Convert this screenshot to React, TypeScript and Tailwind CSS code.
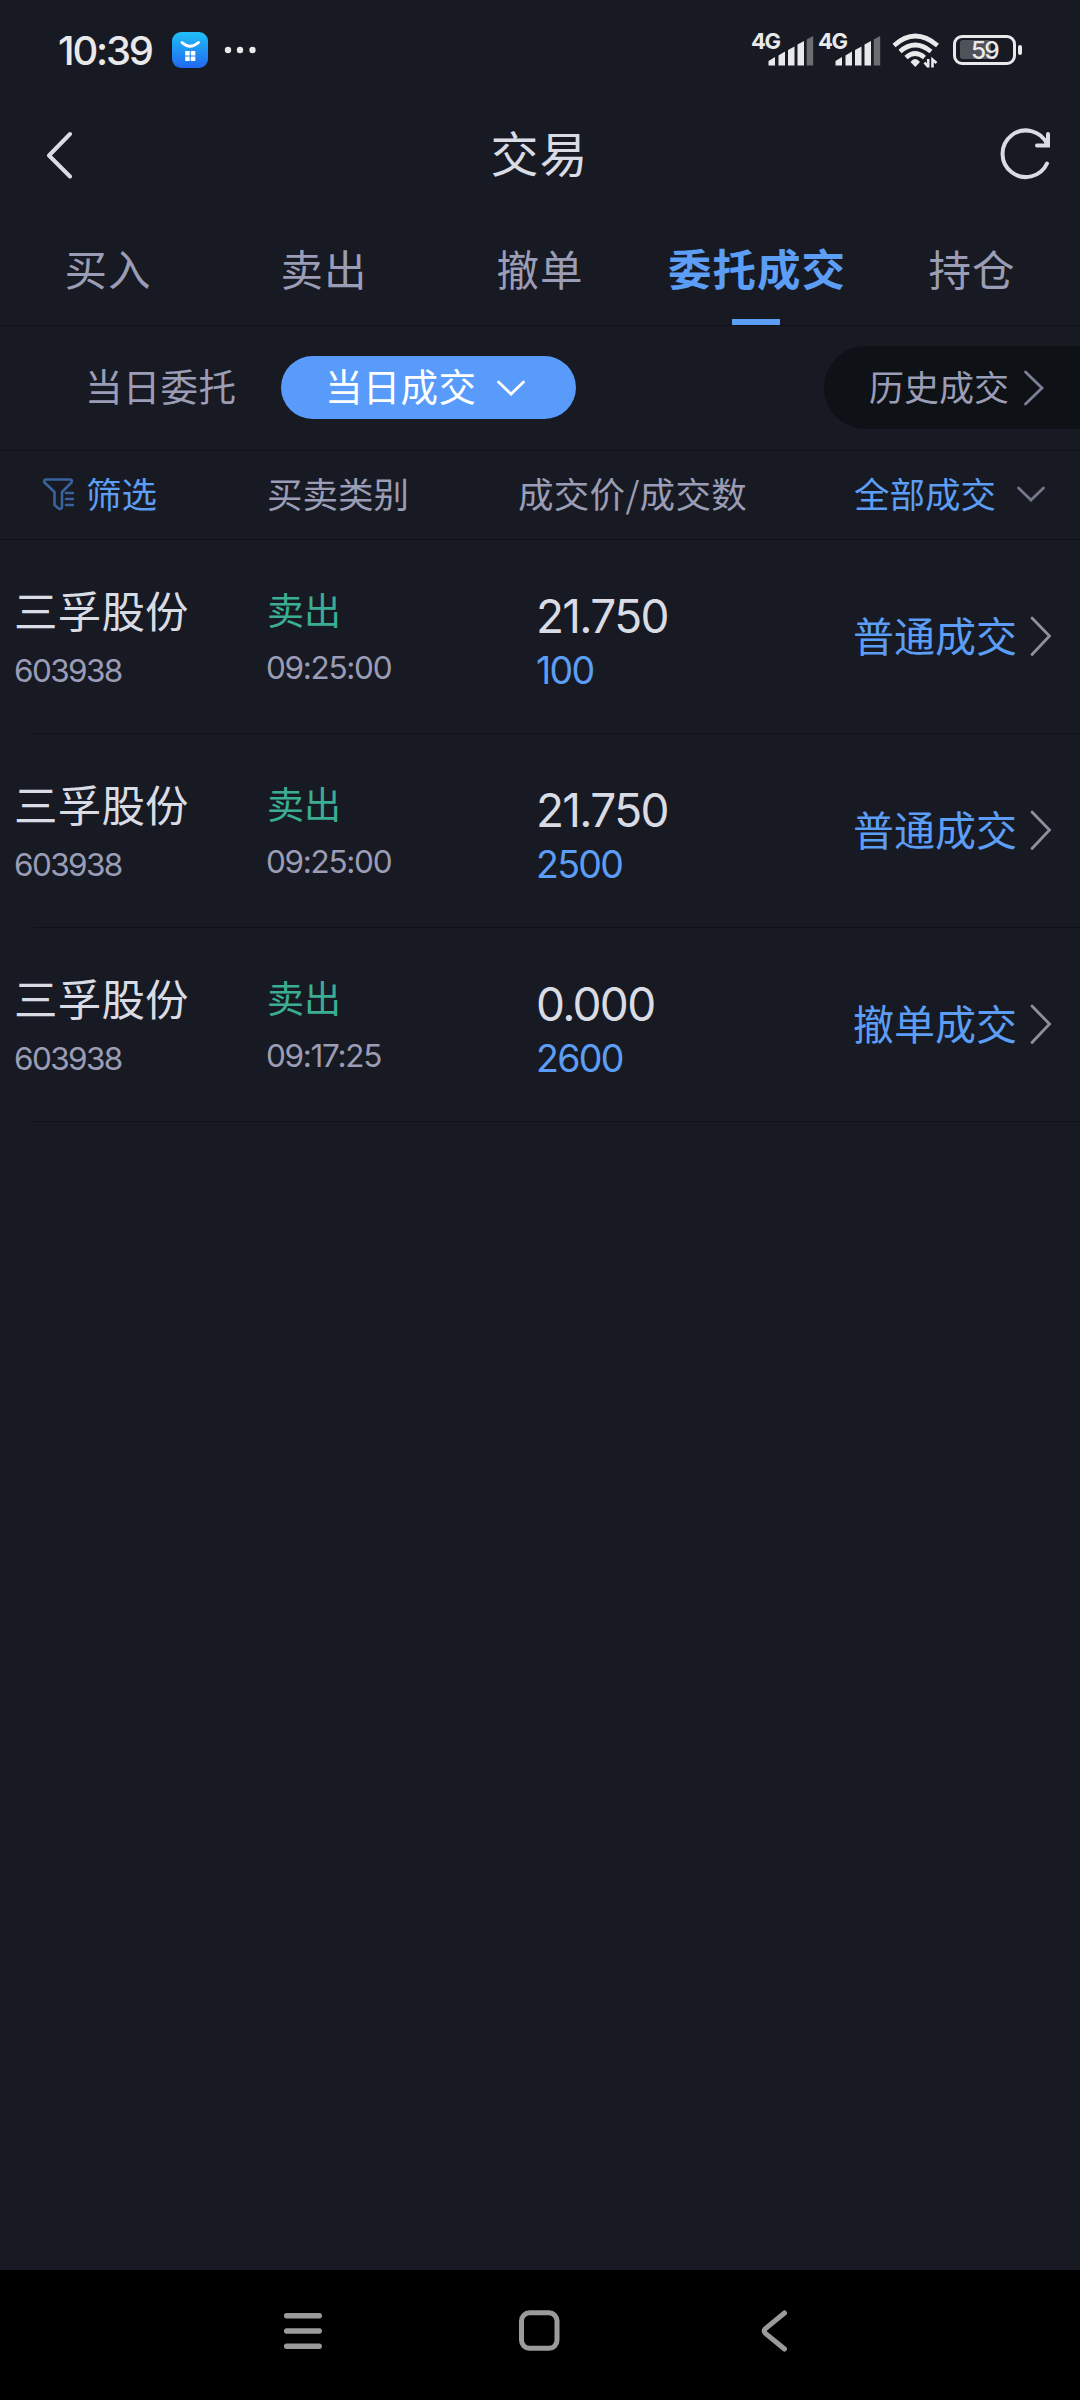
import { useState } from 'react'
import clsx from 'clsx'

const tabs = ['买入', '卖出', '撤单', '委托成交', '持仓']

const deals = [
  { name: '三孚股份', code: '603938', side: '卖出', time: '09:25:00', price: '21.750', amount: '100', type: '普通成交' },
  { name: '三孚股份', code: '603938', side: '卖出', time: '09:25:00', price: '21.750', amount: '2500', type: '普通成交' },
  { name: '三孚股份', code: '603938', side: '卖出', time: '09:17:25', price: '0.000', amount: '2600', type: '撤单成交' },
]

function Signal() {
  return (
    <div className="relative h-[34px] w-[62px]">
      <span className="absolute -left-px top-0 font-['Inter'] text-[22px] leading-[17px] font-bold tracking-[-1.5px]">4G</span>
      <svg className="absolute left-0 top-0" width="62" height="34" viewBox="0 0 62 34" fill="currentColor">
        <path d="M16.500 28l6.500-4v8.500h-6.500zM26.500 22.500l6.500-4v14h-6.500zM36 17l6.500-3.500v19h-6.500zM45.500 11.500l6.500-3.500v24.500h-6.500z" />
        <path d="M54.700 6.500l6.500-3.500v29.500h-6.500z" fill="#6c6d71" />
      </svg>
    </div>
  )
}

function StatusBar() {
  return (
    <div className="flex h-[100px] items-center pl-[58px] pr-[58px] text-[#e9e9eb]">
      <span className="w-[114px] pt-px font-['Inter'] text-[40px] leading-none font-medium tracking-[-2.2px]">10:39</span>
      <svg width="36" height="36" viewBox="0 0 36 36">
        <defs>
          <linearGradient id="app" x1="0" y1="0" x2="0" y2="1">
            <stop offset="0" stopColor="#20bff8" />
            <stop offset="1" stopColor="#2268ee" />
          </linearGradient>
        </defs>
        <rect width="36" height="36" rx="9" fill="url(#app)" />
        <path d="M10 10.500q8 7.500 16.500 0" fill="none" stroke="#fff" strokeWidth="2.800" strokeLinecap="round" />
        <path d="M13.200 19h4.500v4.500h-4.500zM18.800 19h4.500v4.500h-4.500zM13.200 24.500h4.500v4.500h-4.500zM18.800 24.500h4.500v4.500h-4.500z" fill="#fff" />
      </svg>
      <svg className="ml-[16px]" width="32" height="8" viewBox="0 0 32 8" fill="currentColor">
        <circle cx="4" cy="4" r="3.200" />
        <circle cx="16" cy="4" r="3.200" />
        <circle cx="28.500" cy="4" r="3.200" />
      </svg>

      <div className="ml-auto flex items-center">
        <Signal />
        <div className="ml-[5px]">
          <Signal />
        </div>
        <svg className="ml-[11px]" width="48" height="36" viewBox="0 0 48 36" fill="none" stroke="currentColor" strokeWidth="4.600">
          <path d="M2 13.500Q23 -5.500 45.500 13.500" />
          <path d="M8 19.500Q23 6.500 39 19.500" />
          <path d="M14 25.500Q23 17.500 32.500 25.500" />
          <path d="M18.500 30Q23 24 28 30L23.300 35z" fill="currentColor" stroke="none" />
          <path d="M36.200 27v8.500M32.500 30.500L36.200 35M40.500 35.500V27.500L44.500 31" strokeWidth="2.600" />
        </svg>
        <div className="ml-[13px] relative flex h-[30px] w-[63px] items-center justify-center rounded-[9px] border-[3.5px] border-[#e9e9eb]">
          <div className="absolute left-[4px] top-[2px] h-[19px] w-[31px] rounded-[3px] bg-[#505259]" />
          <span className="relative font-['Inter'] text-[24.5px] leading-none font-medium tracking-[-1.8px]">59</span>
        </div>
        <div className="ml-[2px] h-[10px] w-[4px] rounded-[2px] bg-[#e9e9eb]" />
      </div>
    </div>
  )
}

function Header() {
  return (
    <div className="flex h-[110px] items-start justify-between pl-[46px] pr-[29px] text-[#d9dbe5]">
      <svg className="mt-[31px]" width="27" height="48" viewBox="0 0 27 48" fill="none" stroke="currentColor" strokeWidth="4" strokeLinecap="round" strokeLinejoin="round">
        <path d="M24 3L3 24.500l21 21" />
      </svg>
      <h1 className="mt-[27px] pl-[6px] text-[48px] leading-[48px] tracking-[1px]">交易</h1>
      <svg className="mt-[27px]" width="51" height="54" viewBox="0 0 51 54" fill="none" stroke="currentColor" strokeWidth="4" strokeLinecap="round">
        <path d="M47 36.500A23.300 23.300 0 1 1 47 17" />
        <path d="M48 7v11.500H37" strokeLinejoin="miter" />
      </svg>
    </div>
  )
}

function ChevronDown({ className }: { className?: string }) {
  return (
    <svg className={className} width="30" height="16" viewBox="0 0 30 16" fill="none" stroke="currentColor" strokeWidth="2.800" strokeLinecap="round">
      <path d="M2.500 2L15 14 27.500 2" />
    </svg>
  )
}

export default function App() {
  const [active, setActive] = useState(3)

  return (
    <div className="flex h-[2400px] w-[1080px] flex-col overflow-hidden bg-[#171a22] font-['Noto_Sans_CJK_SC',sans-serif] text-[#9a9db5]">
      <StatusBar />
      <Header />

      <div className="flex h-[116px] border-b border-[#0f1117]">
        {tabs.map((tab, i) => (
          <button
            key={tab}
            onClick={() => setActive(i)}
            className={clsx(
              'relative flex h-[115px] w-[216px] justify-center whitespace-nowrap pt-[35px] text-[42.5px] leading-[46px] tracking-[1px]',
              active === i && 'pl-[2px] text-[43.5px] font-bold text-[#5c9df5]',
            )}
          >
            {tab}
            {active === i && <span className="absolute bottom-0 left-[84px] h-[6px] w-[48px] bg-[#5c9df5]" />}
          </button>
        ))}
      </div>

      <div className="flex h-[125px] items-center border-b border-[#0f1117] pb-[1px] pl-[85px]">
        <span className="w-[196px] pb-[5px] text-[37.5px] leading-[40px] tracking-[0.3px]">当日委托</span>
        <button className="flex h-[63px] w-[295px] items-center rounded-full bg-[#589bfb] pl-[44px] text-[37.5px] leading-[40px] tracking-[0.3px] text-white">
          <span className="pb-[5px]">当日成交</span>
          <ChevronDown className="ml-[20px]" />
        </button>
        <button className="ml-auto flex h-[83px] w-[256px] items-center rounded-l-full bg-[#0e1115] pl-[45px] text-[35px] leading-[40px]">
          <span className="pb-[3px]">历史成交</span>
          <svg className="ml-[14px] text-[#7d8094]" width="22" height="36" viewBox="0 0 22 36" fill="none" stroke="currentColor" strokeWidth="2.800" strokeLinecap="round">
            <path d="M2.500 2L19 18 2.500 34" />
          </svg>
        </button>
      </div>

      <div className="flex h-[89px] items-center border-b border-[#0f1117] pb-[4px] text-[35.5px] leading-[40px]">
        <div className="flex w-[267px] items-center pl-[42px] text-[#5c9df5]">
          <svg className="mt-[2px]" width="32" height="34" viewBox="0 0 32 34" fill="none" stroke="#3a629e" strokeWidth="2.600" strokeLinejoin="round" strokeLinecap="round">
            <path d="M3.500 2.500h25q2 0 1 3L20 15v15.500q-1 2-3 1.200L12.500 28V15L2.500 5.500q-1-2 1-3z" />
            <path d="M24 16h7M24 22h7M24 28h7" />
          </svg>
          <span className="ml-[12px]">筛选</span>
        </div>
        <span className="w-[251px]">买卖类别</span>
        <span className="w-[336px] tracking-[0.3px]">成交价/成交数</span>
        <span className="text-[#5c9df5]">全部成交</span>
        <ChevronDown className="ml-[20px] mt-[2px] text-[#74778a]" />
      </div>

      <div className="flex-1">
        {deals.map((deal, i) => (
          <div key={i} className="relative flex h-[194px] items-start">
            <div className="w-[266px] pl-[14px]">
              <div className="mt-[47px] text-[43.5px] leading-[46px] tracking-[0.2px] text-[#d9dbe5]">{deal.name}</div>
              <div className="mt-[22px] font-['Inter'] text-[31.5px] leading-[32px] tracking-[-1.6px]">{deal.code}</div>
            </div>
            <div className="w-[270px]">
              <div className="mt-[48px] pl-px text-[37px] leading-[42px] text-[#3aad92]">{deal.side}</div>
              <div className="mt-[22px] font-['Inter'] text-[31.5px] leading-[32px] tracking-[-1.3px]">{deal.time}</div>
            </div>
            <div className="w-[317px] font-['Inter']">
              <div className="mt-[52px] text-[46px] leading-[48px] tracking-[-1.7px] text-[#d9dbe5]">{deal.price}</div>
              <div className="mt-[11px] text-[37.5px] leading-[40px] tracking-[-1.7px] text-[#5c9df5]">{deal.amount}</div>
            </div>
            <div className="mt-[75px] flex items-center text-[41px] leading-[44px] text-[#5c9df5]">
              <span className="-mt-[4px]">{deal.type}</span>
              <svg className="ml-[10px] text-[#8e919c]" width="26" height="42" viewBox="0 0 26 42" fill="none" stroke="currentColor" strokeWidth="2.800" strokeLinecap="round">
                <path d="M5 3l17.500 18L5 39.500" />
              </svg>
            </div>
            <div className="absolute bottom-0 left-[33px] right-0 h-px bg-[#0f1117]" />
          </div>
        ))}
      </div>

      <div className="flex h-[130px] items-start bg-black pt-[38px] pl-[282px]">
        <svg width="42" height="46" viewBox="0 0 42 46" stroke="#9b9b9b" strokeWidth="5.500" strokeLinecap="round">
          <path d="M4.700 7.700h32.500M4.700 23h32.500M4.700 38.300h32.500" />
        </svg>
        <svg className="ml-[193px]" width="46" height="46" viewBox="0 0 46 46" fill="none" stroke="#9b9b9b" strokeWidth="5">
          <rect x="4.500" y="4.800" width="35.500" height="35.500" rx="8" />
        </svg>
        <svg className="ml-[195px]" width="32" height="46" viewBox="0 0 32 46" fill="none" stroke="#9b9b9b" strokeWidth="5" strokeLinecap="round">
          <path d="M26.500 5L7.500 20.500q-2.500 2.500 0 5L26.500 41" />
        </svg>
      </div>
    </div>
  )
}
